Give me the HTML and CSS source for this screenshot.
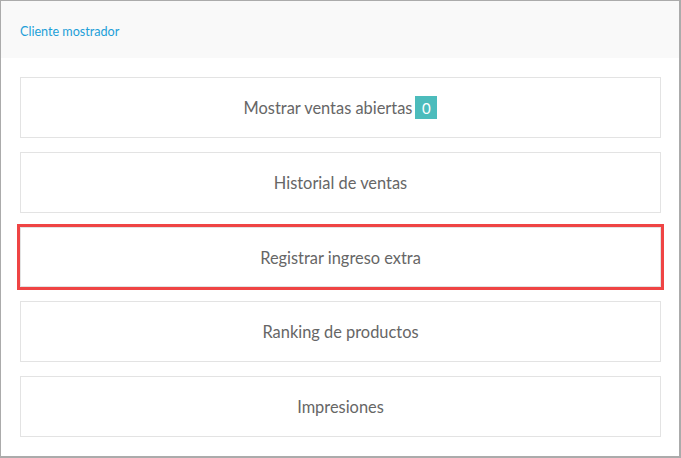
FILE: index.html
```html
<!DOCTYPE html>
<html lang="es">
<head>
<meta charset="utf-8">
<link rel="stylesheet" href="styles.css">
</head>
<body>
<div class="frame">
  <div class="header"><a class="client">Cliente mostrador</a></div>
  <div class="list">
    <div class="item">Mostrar ventas abiertas <span class="badge">0</span></div>
    <div class="item">Historial de ventas</div>
    <div class="item selected">Registrar ingreso extra</div>
    <div class="item">Ranking de productos</div>
    <div class="item">Impresiones</div>
  </div>
</div>
</body>
</html>
```
FILE: styles.css
```css
html, body { margin: 0; padding: 0; background: #fff; }
body { font-family: Lato, "Open Sans", sans-serif; }
.frame {
  width: 681px;
  height: 458px;
  box-sizing: border-box;
  border: 1px solid #ababab;
  border-right-width: 2px;
  border-bottom-width: 2px;
  background: #fff;
}
.header {
  height: 57px;
  background: #f9f9f9;
  display: flex;
  align-items: center;
  padding-left: 19px;
  padding-top: 4px;
  box-sizing: border-box;
}
.client { color: #1d9fd8; font-size: 12.6px; }
.list {
  display: flex;
  flex-direction: column;
  gap: 14px;
  padding: 19px 18px 0 19px;
}
.item {
  height: 61px;
  box-sizing: border-box;
  border: 1px solid #e3e3e3;
  display: flex;
  align-items: center;
  justify-content: center;
  font-size: 16.4px;
  color: #666;
}
.item.selected {
  height: 60px;
  outline: 3px solid #ef4444;
  outline-offset: 0;
}
.badge {
  display: inline-flex;
  align-items: center;
  justify-content: center;
  background: #4cbcbc;
  color: #fff;
  width: 22px;
  height: 23px;
  margin-left: 3px;
  font-size: 15px;
}
```
